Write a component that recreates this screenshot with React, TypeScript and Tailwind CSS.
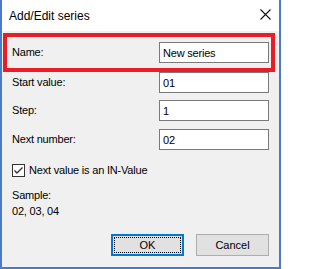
import { useState } from "react";

const font = { fontFamily: '"Liberation Sans", Arial, sans-serif' };

function Field({ label, value }: { label: string; value: string }) {
  return (
    <div className="flex h-[21px] items-center justify-between">
      <span className="text-[11px] tracking-[-0.2px] text-black">{label}</span>
      <input
        className="h-[21px] w-[110px] border border-[#7a7a7a] bg-white pl-[3px] text-[11px] tracking-[-0.2px] text-black outline-none"
        style={font}
        defaultValue={value}
      />
    </div>
  );
}

export default function App() {
  const [checked, setChecked] = useState(true);

  return (
    <div
      className="flex h-[269px] w-[281px] flex-col border-x-2 border-b-2 border-[#4a7bc8] bg-[#f0f0f0]"
      style={font}
    >
      {/* Title bar */}
      <div className="flex h-[31px] shrink-0 items-center justify-between bg-white pl-[7px] pr-[8px]">
        <span className="text-[12px] text-black">Add/Edit series</span>
        <svg width="11" height="11" viewBox="0 0 11 11" className="mb-[3px]">
          <path d="M0.5 0.5 L10.5 10.5 M10.5 0.5 L0.5 10.5" stroke="#111" strokeWidth="1.1" />
        </svg>
      </div>

      {/* Body */}
      <div className="flex flex-1 flex-col pt-[2px]">
        {/* Highlighted name row */}
        <div className="ml-[1px] mr-[4px] h-[39px] border-4 border-[#ec1c24] pl-[5px] pr-[2px]">
          <div className="flex h-full items-center justify-between">
            <span className="text-[11px] tracking-[-0.2px] text-black">Name:</span>
            <input
              className="h-[21px] w-[110px] border border-[#7a7a7a] bg-white pl-[3px] text-[11px] tracking-[-0.2px] text-black outline-none"
              style={font}
              defaultValue="New series"
            />
          </div>
        </div>

        <div className="flex flex-col pl-[10px] pr-[10px]">
          <Field label="Start value:" value="01" />
          <div className="mt-[7px]">
            <Field label="Step:" value="1" />
          </div>
          <div className="mt-[8px]">
            <Field label="Next number:" value="02" />
          </div>

          {/* Checkbox */}
          <label className="mt-[14px] flex h-[13px] cursor-default items-center gap-[4px]">
            <span
              className="flex h-[13px] w-[13px] items-center justify-center border border-[#333] bg-white"
              onClick={() => setChecked((c) => !c)}
            >
              {checked && (
                <svg width="11" height="11" viewBox="0 0 11 11">
                  <path d="M1.5 5.5 L4 8 L9.5 2.5" fill="none" stroke="#333" strokeWidth="1.4" />
                </svg>
              )}
            </span>
            <span className="text-[11px] tracking-[-0.2px] text-black">Next value is an IN-Value</span>
          </label>

          {/* Sample */}
          <div className="mt-[10px] text-[11px] leading-[16px] tracking-[-0.2px] text-black">
            <div>Sample:</div>
            <div>02, 03, 04</div>
          </div>

          {/* Buttons */}
          <div className="mt-[15px] flex justify-end gap-[12px]">
            <button className="flex h-[22px] w-[73px] items-center justify-center border-2 border-[#0078d7] bg-[#e1e1e1] p-[1px]">
              <span className="flex h-full w-full items-center justify-center border border-dotted border-black text-[11px] text-black">
                OK
              </span>
            </button>
            <button className="flex h-[22px] w-[73px] items-center justify-center border border-[#adadad] bg-[#e1e1e1] text-[11px] text-black">
              Cancel
            </button>
          </div>
        </div>
      </div>
    </div>
  );
}
